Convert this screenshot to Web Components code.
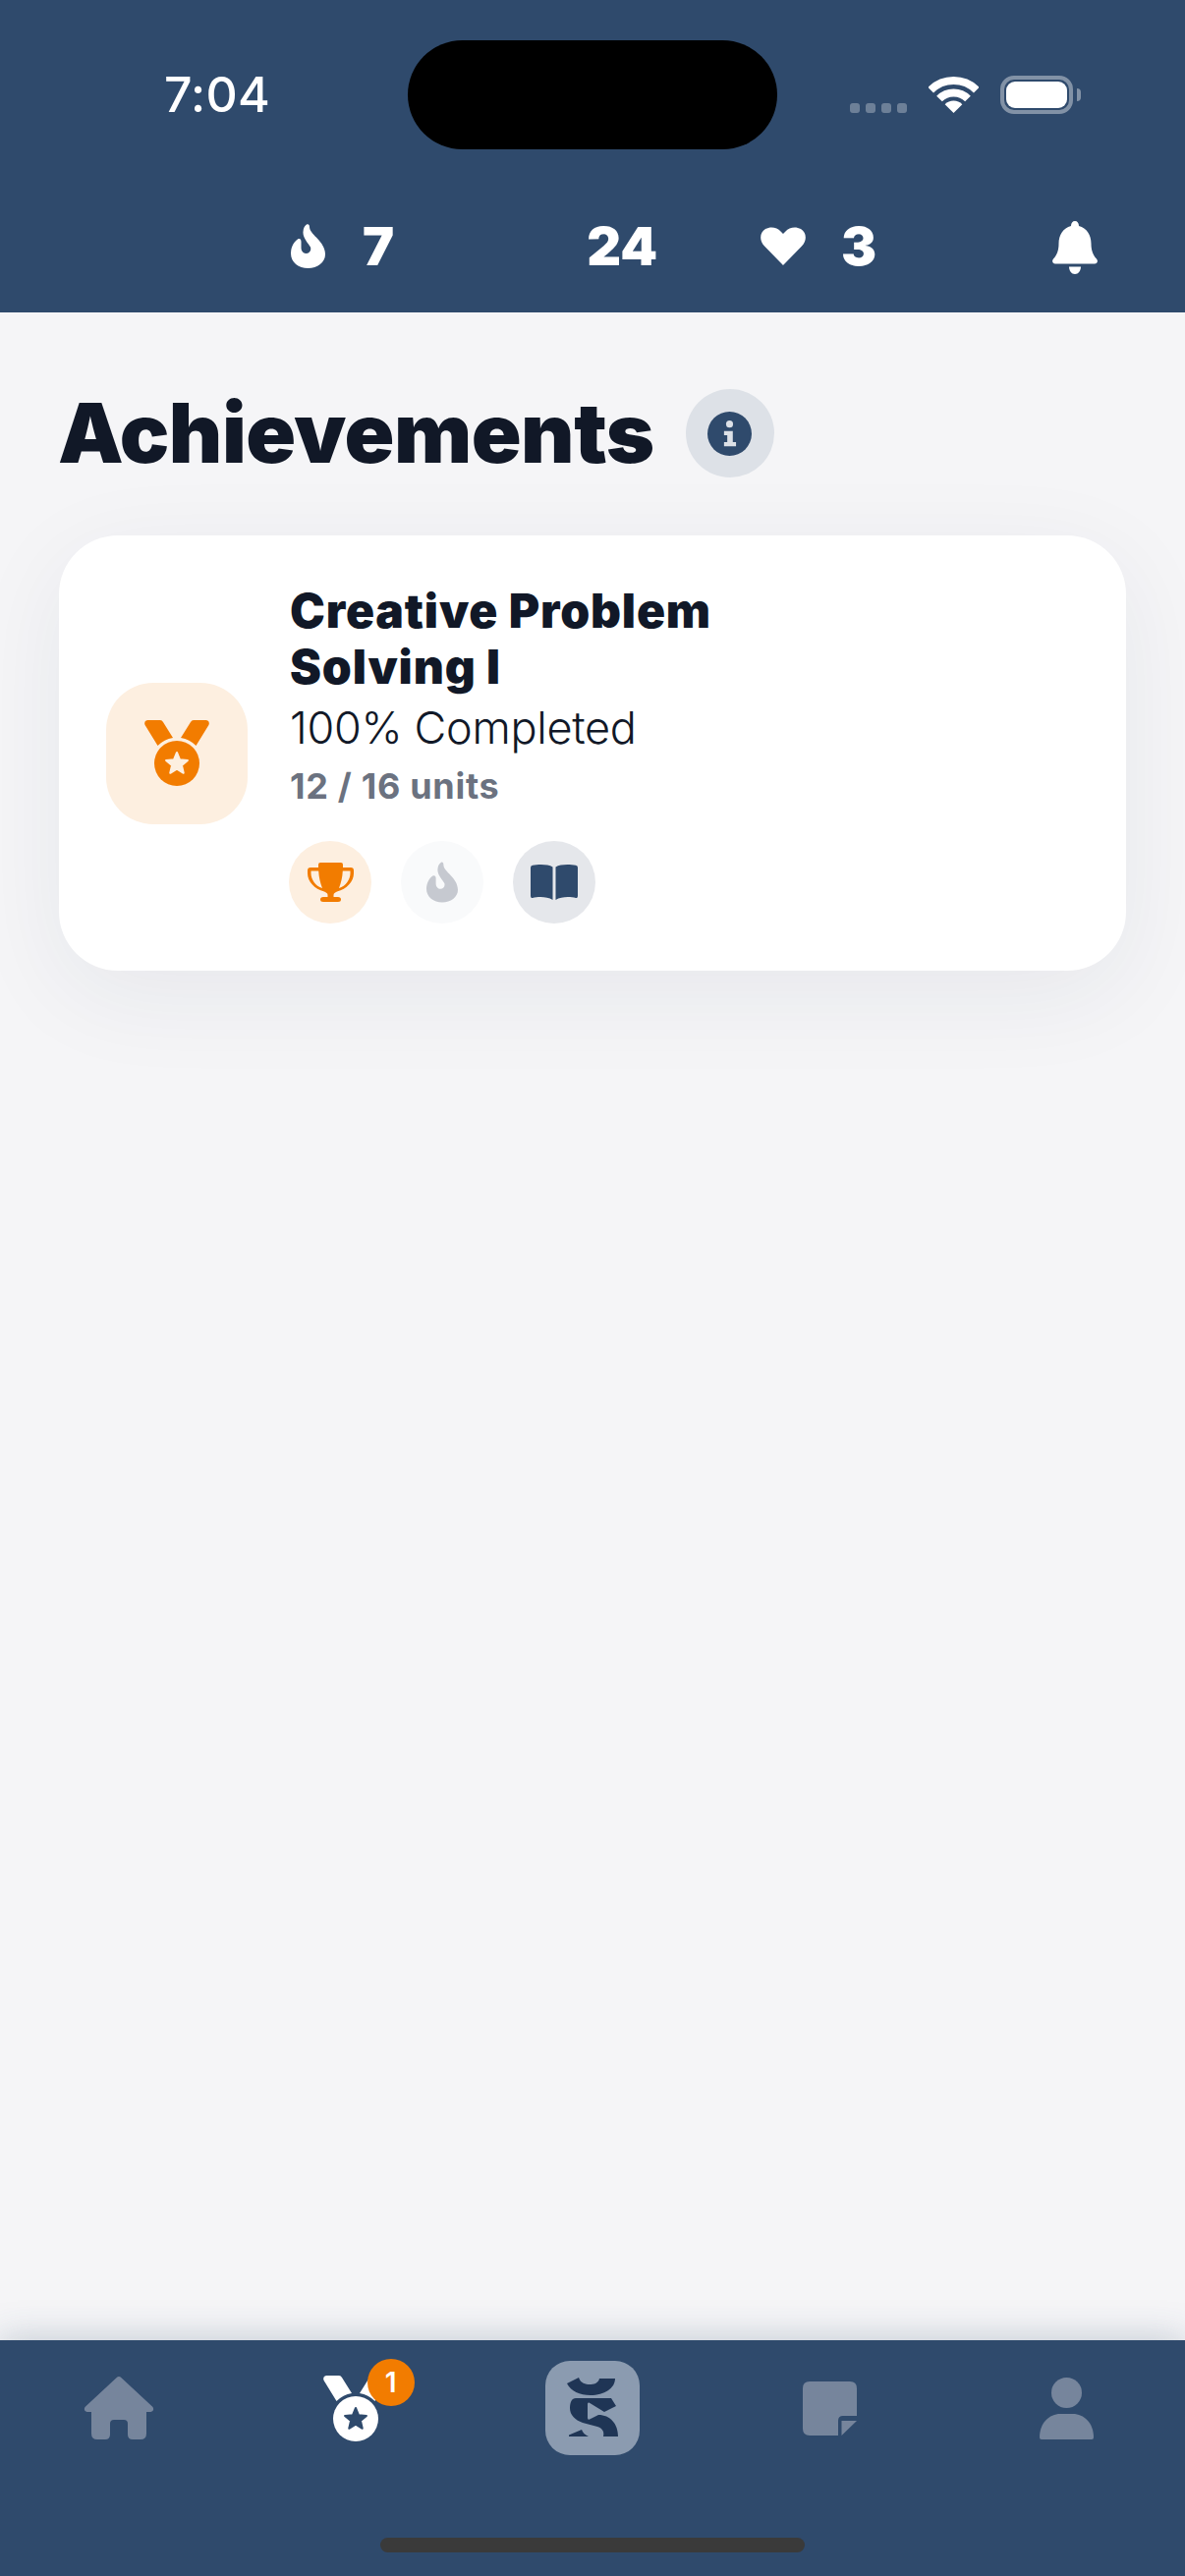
<!DOCTYPE html>
<html lang="en">
<head>
<meta charset="utf-8">
<title>Achievements</title>
<style>
html,body{margin:0;padding:0;height:100%}
body{font-family:Inter,"Noto Sans",sans-serif;background:#f5f5f7;color:#111827}
</style>
</head>
<body>
<app-shell>
  <status-bar slot="top" time="7:04"></status-bar>
  <stat-bar slot="top"></stat-bar>
  <page-title title="Achievements"></page-title>
  <achievement-card>
    <span slot="title">Creative Problem<br>Solving I</span>
    <span slot="progress">100% Completed</span>
    <span slot="units">12 / 16 units</span>
  </achievement-card>
  <tab-bar slot="bottom"></tab-bar>
</app-shell>
<script>
const NAVY='#2f4a6c', ORANGE='#f27c00', PEACH='#fdefe0';
const medal=(fill,cut)=>`<svg width="66" height="67" viewBox="0 0 66 67" style="display:block"><path fill="${fill}" d="M3 0H16Q18 0 19 2L29 18Q20 19.5 13.5 26L.6 5Q-1 1 3 0ZM63 0H50Q48 0 47 2L37 18Q46 19.5 52.5 26L65.4 5Q67 1 63 0Z"/><circle cx="33" cy="44" r="23" fill="${fill}"/><path fill="${cut}" stroke="${cut}" stroke-width="2" stroke-linejoin="round" d="M33 33L36.06 40.3 43.94 40.95 37.95 46.1 39.76 53.8 33 49.7 26.24 53.8 28.05 46.1 22.06 40.95 29.94 40.3Z"/></svg>`;
const flame=(fill,w,h)=>`<svg width="${w}" height="${h}" viewBox="0 0 35 45" style="display:block"><path fill="${fill}" d="M16 .5C18-.5 19 1 19 3C19 11 35 17 35 31C35 39 27 45 17.5 45C8 45 0 39 0 30C0 24 3 18 7 15.5C9 14.5 10.5 15.5 10.5 18L10.5 24C10.5 28 13 30 15.5 30C19 30 21 27 20 23.5C18 20 12 14 12.5 8C12.8 4 14 2 16 .5Z"/></svg>`;
const ICONS={
 trophy:`<svg width="47" height="40" viewBox="0 0 47 40" style="display:block"><path fill="${ORANGE}" fill-rule="evenodd" d="M13 0H34Q36 0 36 2V5H44Q47 5 47 8V11C47 19 40 27 30 29.5C28 30.5 26.5 31 26.5 33V35H31Q34 35 34 37.5Q34 40 31 40H16Q13 40 13 37.5Q13 35 16 35H20.5V33C20.5 31 19 30.5 17 29.5C7 27 0 19 0 11V8Q0 5 3 5H11V2Q11 0 13 0ZM3.5 8.5H11.2C11.5 15 13 21 15 26C8 24 3.5 17 3.5 11ZM43.5 8.5H35.8C35.5 15 34 21 32 26C39 24 43.5 17 43.5 11Z"/></svg>`,
 flame:flame('#c6c9d0',32,42),
 book:`<svg width="48" height="36" viewBox="0 0 48 36" style="display:block"><path fill="${NAVY}" d="M0 3Q0 1 2 .8C8-.3 18-.5 22.5 2.5V36C17 32.5 8 32.5 2 34Q0 34.5 0 32ZM25.5 2.5C30-.5 40-.3 46 .8Q48 1 48 3V32Q48 34.5 46 34C40 32.5 31 32.5 25.5 36Z"/></svg>`,
 home:`<svg width="72" height="64" viewBox="0 0 72 64" style="display:block"><path fill="#76859c" d="M33.5 1.2Q36-1 38.5 1.2L70.5 31Q72.5 35 68.5 36H64V58Q64 64 58 64H50Q45 64 45 59V48Q45 44 41 44H31Q27 44 27 48V59Q27 64 22 64H14Q8 64 8 58V36H3.5Q-.5 35 1.5 31Z"/></svg>`,
 notes:`<svg width="55" height="55" viewBox="0 0 55 55" style="display:block"><path fill="#76859c" d="M7 0H48Q55 0 55 7V35H41Q36 35 36 40V55H7Q0 55 0 48V7Q0 0 7 0ZM39.5 40H55L39.5 55Z"/></svg>`,
 person:`<svg width="55" height="63" viewBox="0 0 55 63" style="display:block"><circle cx="27.5" cy="15.5" r="15.5" fill="#76859c"/><path fill="#76859c" d="M0 61C0 46 10 37 21 37H34C45 37 55 46 55 61Q55 63 53 63H2Q0 63 0 61Z"/></svg>`,
 logo:`<svg width="96" height="96" viewBox="0 0 96 96" style="display:block"><rect width="96" height="96" rx="25" fill="#8b9bb0"/><path fill="#1f3555" d="M22 23L34 17C36 23 41 24 45 24C49 24 54 23 55 18H71C71 28 60 35 46 35C35 35 26 31 22 23ZM31 38H67L72 46L60 52L44.5 42.5Q43 42 43 44V58Q43 60.5 45 59.5L54 55C66 55 74 64 74 77H59C60 73 59 69 53 67L38 63C30 60 25 55 25 48C25 42 27 38 31 38ZM24 77V75.5L37 70C38 73 40 75 44 77Z"/></svg>`,
 bell:`<svg width="46" height="54" viewBox="0 0 46 54" style="display:block"><path fill="#fff" d="M23 0C25.5 0 27 2 27 5C35 7 39.5 14 39.5 23C39.5 31 42 35.5 45 38.5C47 41 45.5 43.5 43 43.5H3C.5 43.5-1 41 1 38.5C4 35.5 6.5 31 6.5 23C6.5 14 11 7 19 5C19 2 20.5 0 23 0ZM17 46.5H29C29 50.5 26.5 54 23 54C19.5 54 17 50.5 17 46.5Z"/></svg>`,
 heart:`<svg width="46" height="39" viewBox="0 0 46 39" style="display:block"><path fill="#fff" d="M23 39L4 19.5C-1.5 14-1 5.5 5 2C10.5-1 17 .5 20.5 4.5L23 7L25.5 4.5C29 .5 35.5-1 41 2C47 5.5 47.5 14 42 19.5Z"/></svg>`,
 wifi:`<svg width="51" height="37" viewBox="0 0 51 37" style="display:block"><g fill="none" stroke="#fff" stroke-width="8"><path d="M2.2 13.7A33 33 0 0 1 48.8 13.7"/><path d="M11 22.5A20.5 20.5 0 0 1 40 22.5"/></g><path fill="#fff" d="M25.5 37L16.66 28.16A12.5 12.5 0 0 1 34.34 28.16Z"/></svg>`,
 info:`<svg width="45" height="45" viewBox="0 0 48 48" style="display:block"><circle cx="24" cy="24" r="24" fill="${NAVY}"/><circle cx="24" cy="13.5" r="3.8" fill="#dde1e7"/><path fill="#dde1e7" d="M18 21H27.5V33H31V37.5H18V33H21.5V25.5H18Z"/></svg>`
};
function comp(name,html){
  customElements.define(name,class extends HTMLElement{
    connectedCallback(){
      if(this.shadowRoot)return;
      this.attachShadow({mode:'open'}).innerHTML=typeof html==='function'?html(this):html;
    }
  });
}
comp('app-shell',`<style>
:host{display:flex;flex-direction:column;height:2622px;background:#f5f5f7;overflow:hidden}
header{background:${NAVY};flex:none}
main{flex:1;padding:0 60px;min-height:0}
footer{flex:none;position:relative}
</style><header><slot name="top"></slot></header><main><slot></slot></main><footer><slot name="bottom"></slot></footer>`);
comp('status-bar',e=>`<style>
:host{display:grid;grid-template-columns:415px 376px 1fr;padding-top:41px;align-items:center;color:#fff}
.time{padding-left:167px;font:550 50px/1 Inter,sans-serif;margin-top:-1px;letter-spacing:.2px}
.island{height:111px;background:#000;border-radius:56px}
.right{display:flex;align-items:center;padding-left:74px;height:40px}
.dots{display:flex;gap:6px;align-self:flex-end;margin-bottom:2px}
.dots i{width:10px;height:10px;border-radius:3px;background:rgba(255,255,255,.3)}
.wifi{margin-left:22px;margin-top:-1px}
.bat{margin-left:22px;width:74px;height:39px;box-sizing:border-box;border:4px solid rgba(255,255,255,.4);border-radius:14px;padding:2px}
.bat b{display:block;height:100%;background:#fff;border-radius:9px}
.nub{width:4px;height:13px;margin-left:4px;background:rgba(255,255,255,.4);border-radius:0 7px 7px 0}
</style><div class="time">${e.getAttribute('time')}</div><div class="island"></div>
<div class="right"><div class="dots"><i></i><i></i><i></i><i></i></div><div class="wifi">${ICONS.wifi}</div><div class="bat"><b></b></div><div class="nub"></div></div>`);
comp('stat-bar',`<style>
:host{display:flex;align-items:center;height:53px;margin-top:72px;padding:0 0 41px 296px;color:#fff;font:900 54px/1 Inter,sans-serif}
.seven{margin-left:38px}.tw{margin-left:196px}.heart{margin-left:105px}.three{margin-left:36px}.bell{margin-left:179px;margin-top:2px}
</style>${flame('#fff',35,45)}<span class="seven">7</span><span class="tw">24</span><span class="heart">${ICONS.heart}</span><span class="three">3</span><span class="bell">${ICONS.bell}</span>`);
comp('page-title',e=>`<style>
:host{display:flex;align-items:center;gap:32px;margin-top:78px}
h1{margin:0;font:900 84px/90px Inter,sans-serif;color:#111827;letter-spacing:-.5px;margin-left:-1px}
.info{width:90px;height:90px;border-radius:50%;background:#dde1e7;display:flex;align-items:center;justify-content:center}
</style><h1>${e.getAttribute('title')}</h1><div class="info">${ICONS.info}</div>`);
comp('achievement-card',`<style>
:host{display:flex;align-items:center;gap:43px;margin-top:59px;padding:48px;background:#fff;border-radius:60px;box-shadow:0 24px 100px rgba(30,45,70,.065)}
.badge{flex:none;width:144px;height:144px;border-radius:48px;background:${PEACH};display:flex;align-items:center;justify-content:center}
.t{font:900 48px/57px Inter,sans-serif;color:#111827;letter-spacing:.85px}
.p{font:300 45px/60px Inter,sans-serif;color:#111827;margin-top:4px;letter-spacing:-.3px}
.u{font:700 36px/48px Inter,sans-serif;color:#6b7280;margin-top:5px;letter-spacing:.7px}
.chips{display:flex;gap:30px;margin:32px 0 0 -1px}
.chip{width:84px;height:84px;border-radius:50%;display:flex;align-items:center;justify-content:center}
</style><div class="badge">${medal(ORANGE,PEACH)}</div><div>
<div class="t"><slot name="title"></slot></div><div class="p"><slot name="progress"></slot></div><div class="u"><slot name="units"></slot></div>
<div class="chips"><div class="chip" style="background:${PEACH}">${ICONS.trophy}</div><div class="chip" style="background:#f9fafb">${ICONS.flame}</div><div class="chip" style="background:#e5e7eb">${ICONS.book}</div></div></div>`);
comp('tab-bar',`<style>
:host{display:block;height:240px;box-sizing:border-box;background:${NAVY};padding-top:21px;box-shadow:0 0 36px rgba(47,74,108,.28)}
.row{display:grid;grid-template-columns:repeat(5,1fr);height:96px;align-items:center;justify-items:center}
.m{position:relative}
.n{position:absolute;left:45px;top:-17px;width:48px;height:48px;border-radius:50%;background:${ORANGE};color:#fff;font:600 28px/48px Inter,sans-serif;text-align:center}
.hb{width:432px;height:15px;border-radius:8px;background:#3a3a3a;margin:84px auto 0}
</style><div class="row"><div>${ICONS.home}</div><div class="m">${medal('#fff',NAVY)}<span class="n">1</span></div><div>${ICONS.logo}</div><div>${ICONS.notes}</div><div>${ICONS.person}</div></div><div class="hb"></div>`);
</script>
</body>
</html>
